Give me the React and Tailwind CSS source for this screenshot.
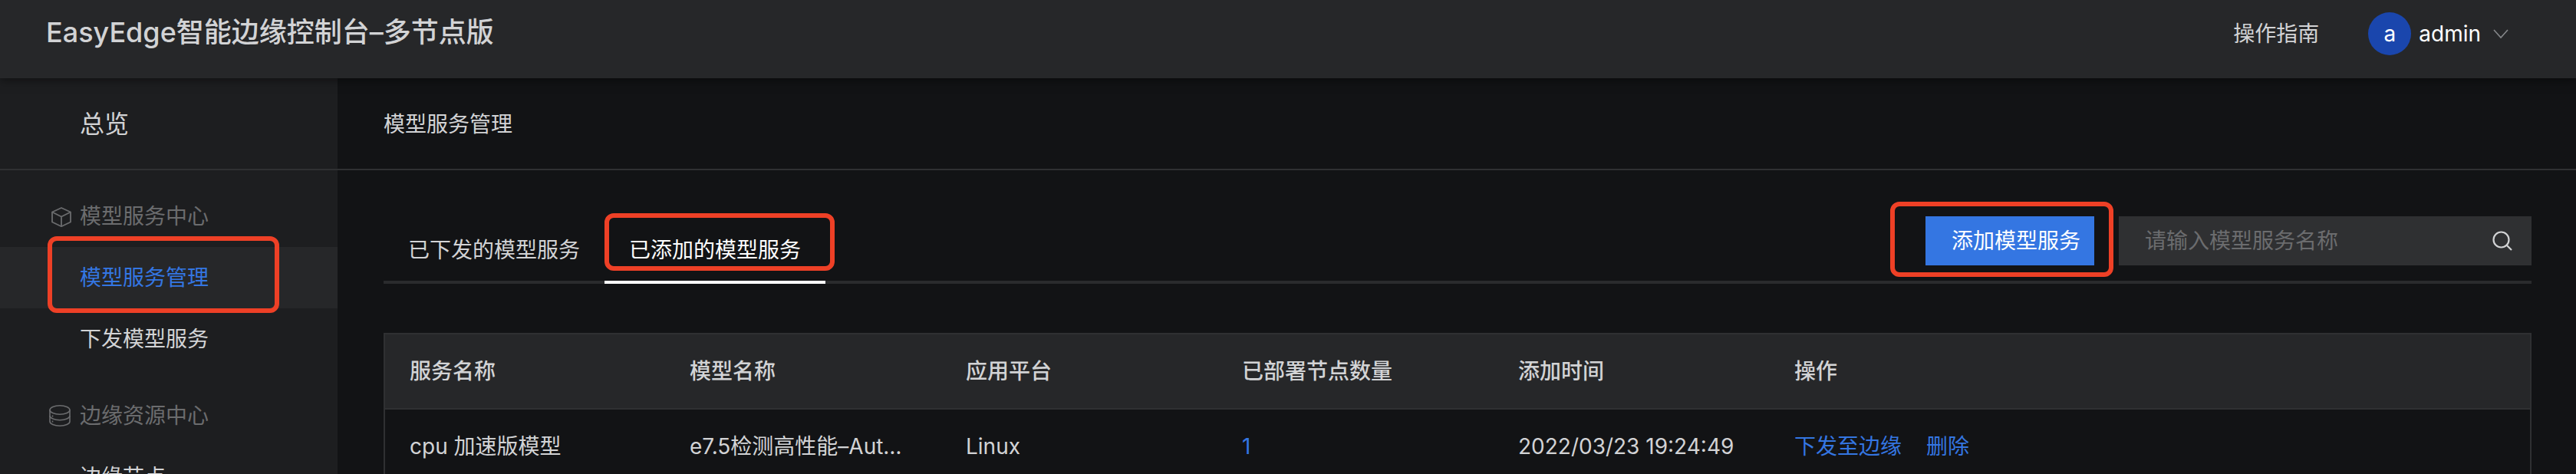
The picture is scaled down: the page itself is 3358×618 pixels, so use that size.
import React, { useState } from 'react'

const navGroups = [
    {
        title: '模型服务中心',
        icon: 'cube',
        items: ['模型服务管理', '下发模型服务'],
    },
    {
        title: '边缘资源中心',
        icon: 'database',
        items: ['边缘节点'],
    },
]

const tabs = ['已下发的模型服务', '已添加的模型服务']

const columns = ['服务名称', '模型名称', '应用平台', '已部署节点数量', '添加时间', '操作']

const services = [
    {
        name: 'cpu 加速版模型',
        model: 'e7.5检测高性能–AutoDL',
        platform: 'Linux',
        nodes: 1,
        time: '2022/03/23 19:24:49',
    },
]

const CubeIcon = () => (
    <svg className="ml-[2px] h-7 w-7" viewBox="0 0 28 28" fill="none" stroke="currentColor" strokeWidth="1.8" strokeLinejoin="round">
        <path d="M14 3 26 8.500v13L14 27.200 2 21.500v-13z" />
        <path d="M2 8.500l12 6 12-6M14 14.500v12.500" />
    </svg>
)

const DatabaseIcon = () => (
    <svg className="mr-[2px] h-7 w-7" viewBox="0 0 28 28" fill="none" stroke="currentColor" strokeWidth="1.6">
        <ellipse cx="14" cy="6.5" rx="13" ry="5.7" />
        <path d="M1 6.5v15c0 3.2 5.8 5.7 13 5.7s13-2.500 13-5.700v-15" />
        <path d="M1 14c0 3.200 5.800 5.700 13 5.700s13-2.500 13-5.700" />
        <path d="M4.500 13.500v2M4.500 20.500v2" />
    </svg>
)

const Header = () => {
    return (
        <header className="relative z-10 flex h-[102px] shrink-0 items-start justify-between bg-[#262729] pl-[60px] pr-[88px] shadow-[0_2px_12px_rgba(0,0,0,0.5)]">
            <h1 className="mt-4 text-4xl leading-[52px] font-medium">EasyEdge智能边缘控制台–多节点版</h1>
            <div className="mt-4 flex h-14 items-center">
                <a href="#guide" className="mr-16">操作指南</a>
                <button className="flex items-center text-white">
                    <span className="flex h-14 w-14 items-center justify-center rounded-full bg-[#1a46ad]">a</span>
                    <span className="ml-[10px]">admin</span>
                    <svg className="ml-4 h-5 w-5 text-[#85878a]" viewBox="0 0 20 20" fill="none" stroke="currentColor" strokeWidth="1.6">
                        <path d="M1 5l9 10 9-10" />
                    </svg>
                </button>
            </div>
        </header>
    )
}

const Sidebar = () => {
    return (
        <nav className="w-[440px] shrink-0 bg-[#1d1e20]">
            <a href="#overview" className="flex h-[120px] items-center border-b-2 border-[#2f3032] pt-[2px] pl-[104px] text-[32px]">总览</a>
            {navGroups.map((group) => (
                <div key={group.title} className="pt-5">
                    <div className="flex h-20 items-center pl-16 text-[#6b6c6e]">
                        {group.icon === 'cube' ? <CubeIcon /> : <DatabaseIcon />}
                        <span className="ml-[10px]">{group.title}</span>
                    </div>
                    {group.items.map((item) => (
                        item === '模型服务管理' ? (
                            <a key={item} href="#manage" className="relative flex h-20 items-center bg-[#262729] pl-[104px] text-[#3476e2]">
                                {item}
                                <span className="absolute -top-[14px] left-[62px] h-[100px] w-[302px] rounded-xl border-[6px] border-[#ee4026]"></span>
                            </a>
                        ) : (
                            <a key={item} href="#nav" className="flex h-20 items-center pl-[104px]">{item}</a>
                        )
                    ))}
                </div>
            ))}
        </nav>
    )
}

const ServiceTable = () => {
    return (
        <table className="mt-16 w-full table-fixed border-collapse border-2 border-[#2f3032] text-left">
            <colgroup>
                <col className="w-[366px]" />
                <col className="w-[360px]" />
                <col className="w-[360px]" />
                <col className="w-[360px]" />
                <col className="w-[360px]" />
                <col />
            </colgroup>
            <thead>
                <tr className="h-[98px] border-b-2 border-[#2f3032] bg-[#262729]">
                    {columns.map((column) => (
                        <th key={column} className="px-8 font-medium">{column}</th>
                    ))}
                </tr>
            </thead>
            <tbody>
                {services.map((service) => (
                    <tr key={service.name} className="h-[98px] border-b-2 border-[#2f3032]">
                        <td className="px-8">{service.name}</td>
                        <td className="truncate pr-12 pl-8">{service.model}</td>
                        <td className="px-8">{service.platform}</td>
                        <td className="px-8"><a href="#nodes" className="text-[#3476e2]">{service.nodes}</a></td>
                        <td className="px-8 whitespace-nowrap">{service.time}</td>
                        <td className="px-8">
                            <div className="flex gap-8 text-[#3476e2]">
                                <button>下发至边缘</button>
                                <button>删除</button>
                            </div>
                        </td>
                    </tr>
                ))}
            </tbody>
        </table>
    )
}

const App = () => {
    const [activeTab, setActiveTab] = useState(tabs[1])
    const [keyword, setKeyword] = useState('')

    return (
        <div className="flex h-screen flex-col overflow-hidden bg-[#121315] font-['Inter','Noto_Sans_CJK_SC',sans-serif] text-[28px] leading-10 text-[#d2d3d5]">
            <Header />
            <div className="flex min-h-0 flex-1">
                <Sidebar />
                <main className="min-w-0 flex-1">
                    <h2 className="flex h-[120px] items-center border-b-2 border-[#2f3032] pt-[2px] pl-[60px]">模型服务管理</h2>
                    <div className="pt-[56px] pr-[58px] pl-[60px]">
                        <div className="flex items-start justify-between border-b-4 border-[#2a2b2d]">
                            <div className="-mb-1 flex">
                                {tabs.map((tab) => (
                                    <button
                                        key={tab}
                                        onClick={() => setActiveTab(tab)}
                                        className={`relative h-[92px] border-b-4 px-8 pt-2 ${activeTab === tab ? 'border-white text-white' : 'border-transparent'}`}
                                    >
                                        {tab}
                                        {tab === '已添加的模型服务' && (
                                            <span className="absolute top-0 left-0 h-[75px] w-[300px] rounded-xl border-[6px] border-[#ee4026]"></span>
                                        )}
                                    </button>
                                ))}
                            </div>
                            <div className="mt-1 flex gap-8">
                                <button className="relative h-16 bg-[#3476e2] pr-[18px] pl-[34px] text-white">
                                    添加模型服务
                                    <span className="absolute -top-[19px] -left-[46px] h-[98px] w-[291px] rounded-xl border-[6px] border-[#ee4026]"></span>
                                </button>
                                <label className="flex h-16 w-[538px] items-center bg-[#2f3032] pr-6 pl-[34px]">
                                    <input
                                        type="text"
                                        aria-label="搜索模型服务"
                                        value={keyword}
                                        onChange={(e) => setKeyword(e.target.value)}
                                        placeholder="请输入模型服务名称"
                                        className="min-w-0 flex-1 bg-transparent placeholder:text-[#6b6c6e] focus:outline-none"
                                    />
                                    <svg className="h-7 w-7" viewBox="0 0 28 28" fill="none" stroke="currentColor" strokeWidth="2.200">
                                        <circle cx="12.500" cy="12.500" r="10" />
                                        <path d="M19.500 19.500l6.500 6.500" />
                                    </svg>
                                </label>
                            </div>
                        </div>
                        <ServiceTable />
                    </div>
                </main>
            </div>
        </div>
    )
}

export default App
